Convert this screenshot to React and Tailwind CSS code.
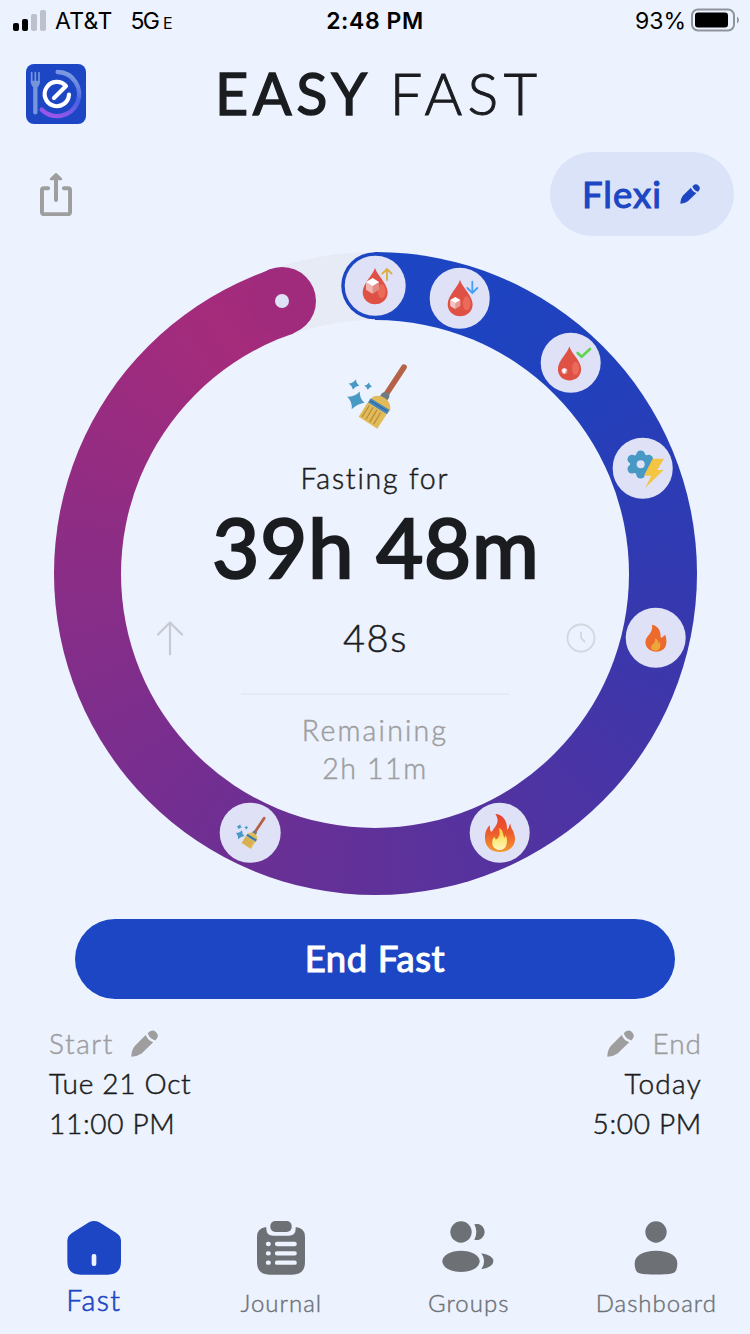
const GOAL_HOURS = 42
const ELAPSED_HOURS = 39.8
const RADIUS = 287.8

const DROP = 'M91 36 C97 59 129 83 129 110 C129 132 112 146 91.500 146 C71 146 54 132 54 110 C54 83 85 59 91 36Z'

function Drop({ children }) {
  return (
    <>
      <path d={DROP} fill="#df5145" />
      <ellipse cx="111" cy="107" rx="11.500" ry="21" fill="#eb6a59" />
      {children}
    </>
  )
}

function SugarHigh() {
  return (
    <Drop>
      <path d="M84 67 L103 79 V102 L84 114 L64 102 V79Z" fill="#e48a82" />
      <path d="M84 91 L64 79 V102 L84 114Z" fill="#f0b5b0" />
      <path d="M84 67 L103 79 L84 91 L64 79Z" fill="#fff" />
      <path d="M127 73 V42 M113 54 L127 40 L141 54" fill="none" stroke="#dbae40" strokeWidth="5.500" strokeLinecap="round" />
    </Drop>
  )
}

function SugarLow() {
  return (
    <Drop>
      <path d="M77 88 L92 97 V115 L77 124 L62 115 V97Z" fill="#e79a93" />
      <path d="M77 106 L62 97 V115 L77 124Z" fill="#f3c5c2" />
      <path d="M77 88 L92 97 L77 106 L62 97Z" fill="#fff" />
      <path d="M128 42 V74 M113 61 L128 76 L143 61" fill="none" stroke="#42a0f5" strokeWidth="5.500" strokeLinecap="round" />
    </Drop>
  )
}

function SugarNormal() {
  return (
    <>
      <g transform="translate(1.500 7.500) scale(.93)">
        <Drop />
      </g>
      <circle cx="71" cy="115" r="9" fill="#f0a39c" />
      <path d="M64 112 L71 107 L78 112 L74 116 L72 123 L66 118Z" fill="#fff" />
      <path d="M111 61 L123 72 L148 49" fill="none" stroke="#62d253" strokeWidth="8" strokeLinecap="round" />
    </>
  )
}

function FatBurn() {
  return (
    <>
      <g fill="#4899c4">
        <circle cx="84" cy="80" r="32" />
        <circle cx="84" cy="52" r="13.500" />
        <circle cx="108" cy="65" r="13.500" />
        <circle cx="108" cy="94" r="13.500" />
        <circle cx="84" cy="109" r="13.500" />
        <circle cx="58" cy="94" r="13.500" />
        <circle cx="58" cy="65" r="13.500" />
      </g>
      <circle cx="84" cy="80" r="12" fill="#dfe1f7" />
      <path d="M120 63 L154 63 L134 97 L153 97 L97 151 L116 114 L94 114Z" fill="#f3c542" />
    </>
  )
}

function SmallFlame() {
  return (
    <>
      <path
        d="M79 51 C97 54 106 69 105 89 C110 93 114 82 119 82 C125 99 127 132 91 132 C65 132 55 110 61 95 C66 82 83 73 79 51Z"
        fill="#ec6a2c"
      />
      <path d="M88 92 C101 98 97 107 99 107 L103 103 C106 116 103 129 90 129 C76 129 74 119 79 112 C88 106 89 101 88 92Z" fill="#eda63a" />
    </>
  )
}

function BigFlame() {
  return (
    <>
      <defs>
        <linearGradient id="flame" x1="0" y1="0" x2="0" y2="1">
          <stop offset="0" stopColor="#e8402f" />
          <stop offset=".5" stopColor="#ec5c2c" />
          <stop offset="1" stopColor="#f39a2f" />
        </linearGradient>
        <linearGradient id="flameCore" x1="0" y1="0" x2="0" y2="1">
          <stop offset="0" stopColor="#f9c93e" />
          <stop offset=".5" stopColor="#fde872" />
          <stop offset="1" stopColor="#fff6c2" />
        </linearGradient>
      </defs>
      <path
        d="M77 34 C99 35 114 55 112 81 C119 79 117 66 122 63 C123 79 133 82 136 105 C138 132 117 148 91 148 C64 148 47 132 46 108 C45 93 50 76 61 68 C60 80 61 86 67 87 C72 73 95 61 77 34Z"
        fill="url(#flame)"
      />
      <path
        d="M87 76 C102 80 99 96 104 105 C107 104 107 99 107 97 C115 106 116 142 91 142 C71 142 65 128 69 110 C71 106 73 104 75 103 C76 109 78 111 81 110 C91 101 92 91 87 76Z"
        fill="url(#flameCore)"
      />
    </>
  )
}

function BroomShape() {
  return (
    <>
      <path d="M171 9 L117 91" stroke="#b66247" strokeWidth="17" strokeLinecap="round" />
      <path d="M104 88 Q112 80 122 86 Q130 92 126 101 L119 111 L98 98Z" fill="#6d7b84" />
      <path d="M76 99 Q94 90 112 101 Q132 113 130 138 L119 150 L63 115Z" fill="#e0bb57" />
      <path d="M62 115 L119 150 L91 194 L35 158Z" fill="#e0bb57" />
      <path d="M78 130 L56 166 M90 137 L68 174 M101 145 L80 180 M67 124 L45 158" stroke="#b98a3e" strokeWidth="3.500" />
      <path d="M71 102 L127 137 L120 150 L63 115Z" fill="#4785ba" />
      <path d="M70 110 L121 141" stroke="#2f5f8c" strokeWidth="3" />
      <g fill="#4899c4">
        <path d="M27 45 Q27 57 37 64 Q25 66 18 76 Q16 65 5 58 Q19 57 27 45Z" />
        <path d="M66 55 Q67 63 75 66 Q67 69 62 77 Q60 69 52 64 Q61 63 66 55Z" />
        <path d="M38 82 Q38 105 53 116 Q32 119 14 135 Q17 113 0 97 Q22 100 38 82Z" />
      </g>
    </>
  )
}

function SmallBroom() {
  return (
    <g transform="translate(48 42) scale(.5)">
      <BroomShape />
    </g>
  )
}

const stages = [
  { hour: 0, Icon: SugarHigh },
  { hour: 2, Icon: SugarLow },
  { hour: 5, Icon: SugarNormal },
  { hour: 8, Icon: FatBurn },
  { hour: 12, Icon: SmallFlame },
  { hour: 18, Icon: BigFlame },
  { hour: 24, Icon: SmallBroom }
]

function ringPosition(hour) {
  const angle = (hour / GOAL_HOURS) * Math.PI * 2
  return {
    left: 321.5 + RADIUS * Math.sin(angle),
    top: 321.5 - RADIUS * Math.cos(angle)
  }
}

function Pencil({ className }) {
  return (
    <svg className={className} viewBox="0 0 79 78" fill="currentColor">
      <path d="M43 14 Q49 30 65 35 L31 68 Q20 76 1 78 Q1 58 11 46Z" />
      <path d="M49 9 Q60 -5 73 5 Q85 17 71 30 Q54 25 49 9Z" />
    </svg>
  )
}

function Logo() {
  return (
    <svg className="size-15" viewBox="0 0 180 180" fill="none" strokeLinecap="round">
      <defs>
        <linearGradient id="plate" x1=".6" y1="0" x2=".3" y2="1">
          <stop offset="0" stopColor="#7c9be0" />
          <stop offset=".5" stopColor="#4a62e4" />
          <stop offset="1" stopColor="#9a55ea" />
        </linearGradient>
      </defs>
      <rect width="180" height="180" rx="24" fill="#1c46c4" />
      <path d="M17 26 V56 M28 26 V56 M39 26 V56" stroke="#7795da" strokeWidth="5" />
      <path d="M14.500 50 H41.500 Q42 63 34 70 H22 Q14 63 14.500 50Z" fill="#7795da" />
      <path d="M28 66 V145" stroke="#7795da" strokeWidth="13" />
      <path d="M95 24 A66 66 0 1 1 47 137" stroke="url(#plate)" strokeWidth="13" />
      <path d="M84 102 L120 66 A36.500 36.500 0 1 0 129 92" stroke="#fff" strokeWidth="12.500" strokeLinejoin="round" />
    </svg>
  )
}

function StatusBar() {
  return (
    <div className="relative flex h-10 items-center justify-between pr-[11px] pl-[13px] font-['Inter',sans-serif] text-[23px] text-black">
      <div className="flex items-center">
        <div className="mr-[9px] flex h-[21px] items-end gap-[3px]">
          <div className="h-2 w-1.5 rounded-[2px] bg-black" />
          <div className="h-3 w-1.5 rounded-[2px] bg-black" />
          <div className="h-[17px] w-1.5 rounded-[2px] bg-[#bcc1cd]" />
          <div className="h-[21px] w-1.5 rounded-[2px] bg-[#bcc1cd]" />
        </div>
        <span className="pt-0.5 tracking-[0.3px]">AT&amp;T</span>
        <span className="ml-[18px] pt-0.5 tracking-[-1.8px]">5G</span>
        <span className="ml-[5px] pt-1.5 text-base">E</span>
      </div>
      <span className="absolute left-1/2 -translate-x-1/2 pt-0.5 font-semibold tracking-[0.6px] whitespace-nowrap">2:48 PM</span>
      <div className="flex items-center">
        <span className="mr-[5px] pt-0.5">93%</span>
        <svg className="h-6 w-12" viewBox="0 0 48 24">
          <rect x="1" y="1.500" width="42" height="21" rx="6" fill="none" stroke="#8f939c" strokeWidth="2" />
          <rect x="4" y="4.500" width="33" height="15" rx="3" fill="#000" />
          <path d="M46 8.500 Q48 10 48 12 Q48 14 46 15.500Z" fill="#8f939c" />
        </svg>
      </div>
    </div>
  )
}

function FastingRing() {
  return (
    <div className="relative mx-auto mt-4 h-[643px] w-[643px] rounded-full bg-[conic-gradient(#1c46c4_0deg,#2141bd_45deg,#3239b0_90deg,#4a34a5_135deg,#5f3199_180deg,#762e90_225deg,#8a2d86_270deg,#a52b7b_328deg,#a02b7d_341deg,#e6ebf5_341.3deg)] p-[67.5px]">
      <div className="flex size-full flex-col items-center rounded-full bg-[#ecf2fe] pt-[44.5px]">
        <svg className="ml-[3px] h-[65px] w-[60px] shrink-0" viewBox="0 0 180 194">
          <BroomShape />
        </svg>
        <div className="mt-[29px] h-10 text-[28.5px] leading-10 font-light tracking-[1.8px] [-webkit-text-stroke:0.5px]">Fasting for</div>
        <div className="h-[98px] pl-0.5 text-[81px] leading-[98px] tracking-[1px] whitespace-nowrap [-webkit-text-stroke:2.6px]">39h 48m</div>
        <div className="flex h-[84px] w-[441px] shrink-0 items-center justify-between pl-px text-[38px] font-light tracking-[1.6px]">
          <svg className="h-[35px] w-7" viewBox="0 0 28 35" fill="none" stroke="#c7cad1" strokeWidth="2.200" strokeLinecap="round" strokeLinejoin="round">
            <path d="M14 33.500 V1.500 M2 13.500 L14 1.500 L26 13.500" />
          </svg>
          <span className="pb-0.5 pl-0.5 [-webkit-text-stroke:0.5px]">48s</span>
          <svg className="size-[30px]" viewBox="0 0 30 30" fill="none" stroke="#d3d7e0" strokeWidth="1.800" strokeLinecap="round">
            <circle cx="15" cy="15" r="13.500" />
            <path d="M15 9.500 V15 L18.500 18.500" />
          </svg>
        </div>
        <div className="mt-[13px] h-0.5 w-[268px] shrink-0 bg-[#e6eaf5]" />
        <div className="mt-4 text-center text-[28.5px] leading-[38px] font-light text-[#9e9e9e] [-webkit-text-stroke:0.5px]">
          <div className="tracking-[2.2px]">Remaining</div>
          <div className="tracking-[1.6px]">2h 11m</div>
        </div>
      </div>

      {/* Rounded ends of the progress arc */}
      <div className="absolute size-[67.5px] -translate-1/2 rounded-full bg-[#1c46c4]" style={ringPosition(0)} />
      <div className="absolute size-[68px] -translate-1/2 rounded-full bg-[#a02b7d]" style={ringPosition(ELAPSED_HOURS)} />
      <div className="absolute size-3.5 -translate-1/2 rounded-full bg-[#dfe1f7]" style={ringPosition(ELAPSED_HOURS)} />

      {/* Fasting stages */}
      {stages.map(({ hour, Icon }) => (
        <div key={hour} className="absolute size-[60.6px] -translate-1/2 rounded-full bg-[#dfe1f7]" style={ringPosition(hour)}>
          <svg className="size-full" viewBox="0 0 182 182" fill="none">
            <Icon />
          </svg>
        </div>
      ))}
    </div>
  )
}

function HomeIcon() {
  return (
    <>
      <path d="M81 19 Q96 11 112 19 L162 50 Q177 59 177 74 V136 Q177 176 137 176 H56 Q16 176 16 136 V74 Q16 59 31 50Z" />
      <rect x="89" y="114" width="14" height="36" rx="6" fill="#ecf2fe" />
    </>
  )
}

function JournalIcon() {
  return (
    <>
      <path d="M52 33 V38 Q52 59 73 59 H119 Q140 59 140 38 V33 Q168 36 168 62 V138 Q168 176 130 176 H62 Q24 176 24 138 V62 Q24 36 52 33Z" />
      <rect x="64" y="15" width="64" height="33" rx="15" />
      <path d="M57 84 H59 M57 112 H59 M57 140 H59 M84 84 H137 M84 112 H137 M84 140 H137" stroke="#ecf2fe" strokeWidth="13" strokeLinecap="round" />
    </>
  )
}

function GroupsIcon() {
  return (
    <>
      <circle cx="72" cy="48" r="32" />
      <ellipse cx="72" cy="136" rx="56" ry="32" />
      <path d="M112 25 A24 24 0 1 1 112 71 Q124 48 112 25Z" />
      <path d="M133 112 Q169 118 169 136 Q169 154 133 160 Q150 136 133 112Z" />
    </>
  )
}

function DashboardIcon() {
  return (
    <>
      <circle cx="96" cy="48" r="32" />
      <path d="M96 104 C135 104 160 119 160 141 C160 156 157 167 148 171 C134 177 58 177 44 171 C35 167 32 156 32 141 C32 119 57 104 96 104Z" />
    </>
  )
}

const tabs = [
  { label: 'Fast', Icon: HomeIcon, active: true },
  { label: 'Journal', Icon: JournalIcon },
  { label: 'Groups', Icon: GroupsIcon },
  { label: 'Dashboard', Icon: DashboardIcon }
]

export default function App() {
  return (
    <div className="h-[1334px] w-[750px] overflow-hidden bg-[#ecf2fe] font-['Lato',sans-serif] text-[#1b1c20]">
      <StatusBar />

      {/* Header */}
      <header className="relative mt-6 flex h-15 items-center px-[26px]">
        <Logo />
        <h1 className="absolute left-[215px] pb-0.5 text-[57.5px] leading-[60px] whitespace-nowrap">
          <span className="tracking-[4.6px] [-webkit-text-stroke:1.4px]">EASY</span>
          <span className="ml-[18px] font-light tracking-[5.4px] [-webkit-text-stroke:1px]">FAST</span>
        </h1>
      </header>

      <div className="mt-7 flex h-21 items-center justify-between pr-4 pl-10">
        <svg className="h-[43px] w-8" viewBox="0 0 96 130" fill="none" stroke="#9e9e9e" strokeWidth="12" strokeLinecap="round">
          <path d="M24 46 H12 Q5.500 46 5.500 52 V118 Q5.500 124.500 12 124.500 H84 Q90.500 124.500 90.500 118 V52 Q90.500 46 84 46 H72" />
          <path d="M48 16 V82" />
          <path d="M44 2 Q48 -2 52 2 L66 16 Q69 21 64 22 H32 Q27 21 30 16Z" fill="#9e9e9e" stroke="none" />
        </svg>
        <button className="flex h-21 w-[184px] items-center rounded-full bg-[#dbe3f8] pl-8 text-[36.5px] text-[#1c46c4]">
          <span className="w-20 tracking-[1px] [-webkit-text-stroke:1.1px]">Flexi</span>
          <Pencil className="ml-[18px] size-5" />
        </button>
      </div>

      <FastingRing />

      <button className="mx-auto mt-6 flex h-20 w-[600px] items-center justify-center rounded-full bg-[#1c46c4] pb-px text-[36.5px] tracking-[0.6px] text-white [-webkit-text-stroke:1.1px]">
        End Fast
      </button>

      <div className="mt-6 flex justify-between pr-12 pl-[49px] text-[28px] leading-10 font-light tracking-[0.7px] [-webkit-text-stroke:0.5px]">
        <div>
          <div className="flex items-center text-[#9e9e9e]">
            <span className="tracking-[1.6px]">Start</span>
            <Pencil className="ml-[17px] size-[27px]" />
          </div>
          <div>Tue 21 Oct</div>
          <div>11:00 PM</div>
        </div>
        <div className="text-right">
          <div className="flex items-center justify-end text-[#9e9e9e]">
            <Pencil className="mr-[18px] size-[27px]" />
            <span className="tracking-[1px]">End</span>
          </div>
          <div className="tracking-[1.3px]">Today</div>
          <div>5:00 PM</div>
        </div>
      </div>

      {/* Bottom navigation */}
      <nav className="mt-[73px] grid grid-cols-4">
        {tabs.map(({ label, Icon, active }) => (
          <div key={label} className={active ? 'flex flex-col items-center text-[#1c46c4]' : 'flex flex-col items-center text-[#6d7176]'}>
            <svg className="size-16" viewBox="0 0 192 192" fill="currentColor">
              <Icon />
            </svg>
            <span
              className={
                active
                  ? 'text-[28.5px] leading-10 font-light tracking-[1.4px] [-webkit-text-stroke:0.6px]'
                  : 'mt-[3px] text-2xl leading-10 font-light tracking-[1px] [-webkit-text-stroke:0.4px]'
              }
            >
              {label}
            </span>
          </div>
        ))}
      </nav>
    </div>
  )
}
